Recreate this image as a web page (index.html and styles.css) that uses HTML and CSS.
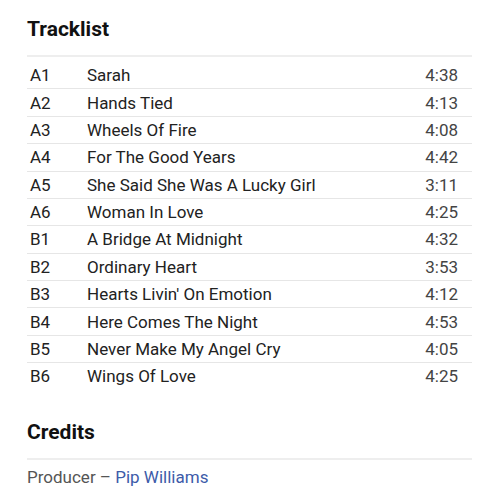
FILE: index.html
```html
<!DOCTYPE html>
<html lang="en">
<head>
  <meta charset="UTF-8" />
  <meta name="viewport" content="width=device-width, initial-scale=1.0" />
  <title>Tracklist</title>
  <link rel="stylesheet" href="styles.css">
</head>
<body>
  <div class="container">
    <!-- Tracklist -->
    <section class="section">
      <h2 class="section-title">Tracklist</h2>
      <table class="tracklist">
        <tbody>
          <tr><td class="pos">A1</td><td class="title">Sarah</td><td class="dur">4:38</td></tr>
          <tr><td class="pos">A2</td><td class="title">Hands Tied</td><td class="dur">4:13</td></tr>
          <tr><td class="pos">A3</td><td class="title">Wheels Of Fire</td><td class="dur">4:08</td></tr>
          <tr><td class="pos">A4</td><td class="title">For The Good Years</td><td class="dur">4:42</td></tr>
          <tr><td class="pos">A5</td><td class="title">She Said She Was A Lucky Girl</td><td class="dur">3:11</td></tr>
          <tr><td class="pos">A6</td><td class="title">Woman In Love</td><td class="dur">4:25</td></tr>
          <tr><td class="pos">B1</td><td class="title">A Bridge At Midnight</td><td class="dur">4:32</td></tr>
          <tr><td class="pos">B2</td><td class="title">Ordinary Heart</td><td class="dur">3:53</td></tr>
          <tr><td class="pos">B3</td><td class="title">Hearts Livin' On Emotion</td><td class="dur">4:12</td></tr>
          <tr><td class="pos">B4</td><td class="title">Here Comes The Night</td><td class="dur">4:53</td></tr>
          <tr><td class="pos">B5</td><td class="title">Never Make My Angel Cry</td><td class="dur">4:05</td></tr>
          <tr><td class="pos">B6</td><td class="title">Wings Of Love</td><td class="dur">4:25</td></tr>
        </tbody>
      </table>
    </section>

    <!-- Credits -->
    <section class="section credits">
      <h2 class="section-title">Credits</h2>
      <p class="credit">Producer &ndash; <a href="#">Pip Williams</a></p>
    </section>
  </div>
</body>
</html>
```

FILE: styles.css
```css
body {
  font-family: Roboto, "Noto Sans", Arial, sans-serif;
  margin: 0;
  padding: 0;
  color: #222;
  background: #fff;
}
.container {
  padding: 17px 28px 0 27px;
}
.section-title {
  margin: 0;
  font-size: 21px;
  line-height: 24px;
  font-weight: 700;
  color: #111;
  padding-bottom: 14px;
  border-bottom: 2px solid #eeeeee;
}
.tracklist {
  width: 100%;
  border-collapse: collapse;
  margin-top: 5px;
  font-size: 17px;
}
.tracklist tr {
  border-bottom: 1px solid #e6e6e6;
}
.tracklist tr:last-child {
  border-bottom: none;
}
.tracklist td {
  padding: 1.2px 3px;
  line-height: 24px;
}
.pos {
  width: 51px;
}
.dur {
  text-align: right;
  color: #444;
  padding-right: 14px !important;
}
.credits {
  margin-top: 30px;
}
.credit {
  margin: 5px 0 0;
  font-size: 17px;
  line-height: 24px;
  color: #555;
}
.credit a {
  color: #3d5ba9;
  text-decoration: none;
}
```
